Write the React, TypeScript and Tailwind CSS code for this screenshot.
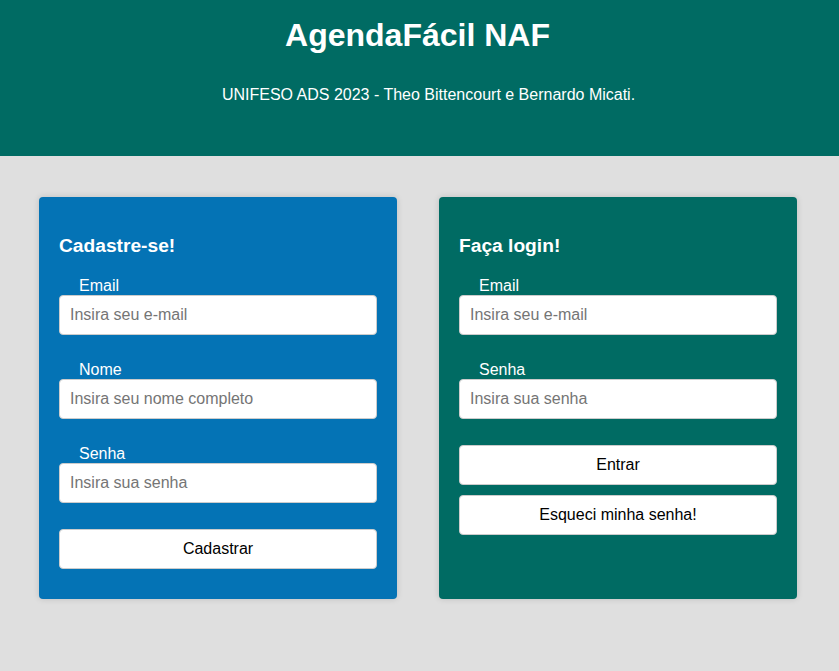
import React from 'react';

function Field({ label, placeholder, type = 'text' }: { label: string; placeholder: string; type?: string }) {
  return (
    <div className="flex flex-col">
      <label className="pl-5 text-[16px] leading-[18px] text-white">{label}</label>
      <input
        type={type}
        placeholder={placeholder}
        className="h-10 w-full rounded-[4px] border border-[#cccccc] bg-white px-[10px] text-[16px] text-black placeholder:text-[#757575] outline-none"
      />
    </div>
  );
}

function Btn({ children }: { children: React.ReactNode }) {
  return (
    <button className="h-10 w-full rounded-[4px] border border-[#cccccc] bg-white text-[16px] text-black">
      {children}
    </button>
  );
}

export default function App() {
  return (
    <div className="min-h-[671px] bg-[#dfdfdf] font-['Liberation_Sans',Arial,sans-serif]">
      <header className="h-[156px] bg-[#006b63] text-white text-center">
        <h1 className="pt-[17px] pr-[4px] text-[32px] leading-[37px] font-bold">AgendaFácil NAF</h1>
        <p className="mt-[32px] pl-[18px] text-[16px] leading-[18px]">UNIFESO ADS 2023 - Theo Bittencourt e Bernardo Micati.</p>
      </header>

      <main className="flex gap-[42px] pl-[39px] pr-[42px] pt-[41px]">
        <section className="flex-1 rounded-[4px] bg-[#0473b5] px-5 pt-[38px] pb-[30px] shadow-[0_0_6px_rgba(0,0,0,0.15)]">
          <h2 className="text-[19.2px] leading-[22px] font-bold text-white">Cadastre-se!</h2>
          <div className="mt-[20px] flex flex-col gap-[26px]">
            <Field label="Email" placeholder="Insira seu e-mail" type="email" />
            <Field label="Nome" placeholder="Insira seu nome completo" />
            <Field label="Senha" placeholder="Insira sua senha" type="password" />
          </div>
          <div className="mt-[26px]">
            <Btn>Cadastrar</Btn>
          </div>
        </section>

        <section className="flex-1 rounded-[4px] bg-[#006b63] px-5 pt-[38px] pb-[30px] shadow-[0_0_6px_rgba(0,0,0,0.15)]">
          <h2 className="text-[19.2px] leading-[22px] font-bold text-white">Faça login!</h2>
          <div className="mt-[20px] flex flex-col gap-[26px]">
            <Field label="Email" placeholder="Insira seu e-mail" type="email" />
            <Field label="Senha" placeholder="Insira sua senha" type="password" />
          </div>
          <div className="mt-[26px] flex flex-col gap-[10px]">
            <Btn>Entrar</Btn>
            <Btn>Esqueci minha senha!</Btn>
          </div>
        </section>
      </main>
    </div>
  );
}
